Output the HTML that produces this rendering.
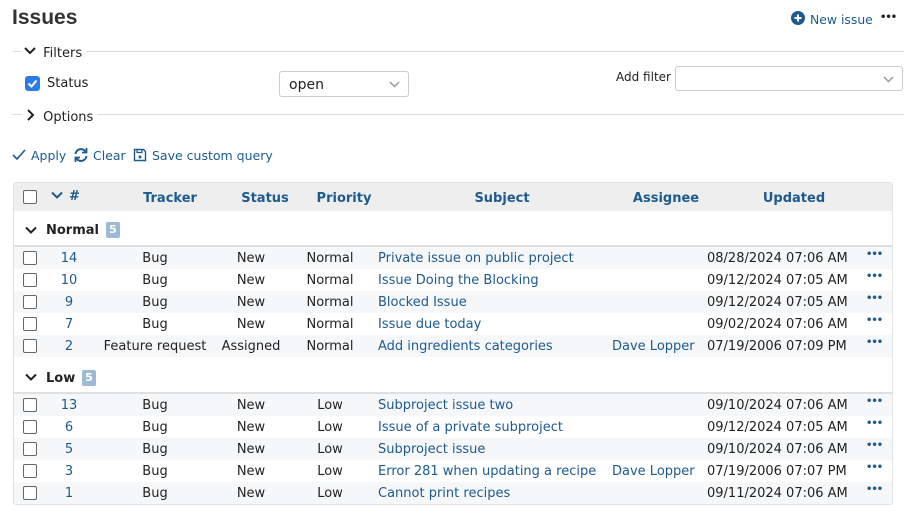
<!DOCTYPE html>
<html><head><meta charset="utf-8"><style>
*{margin:0;padding:0;box-sizing:border-box}
body{width:904px;height:519px;background:#fff;font-family:"DejaVu Sans","Liberation Sans",sans-serif;font-size:13px;color:#222;position:relative;overflow:hidden}
.a{position:absolute;white-space:nowrap}
.c{position:absolute;white-space:nowrap;transform:translateX(-50%)}
.l{color:#1d5a8e}
.cb{position:absolute;width:14px;height:14px;border:1.5px solid #666;border-radius:2px;background:#fff}
.row{position:absolute;left:14px;width:878px;height:22px;line-height:24px}
.odd{background:#f6f7f9}
.hd{font-weight:bold;color:#1d5a8e}
.dots{position:absolute;font-weight:bold;color:#1d5a8e;letter-spacing:-1px;font-size:10px}
.sep{position:absolute;height:1px;background:#ddd}
</style></head><body>
<div class="a" style="left:12px;top:6px;font-family:'Liberation Sans',sans-serif;font-size:21px;font-weight:bold;color:#333">Issues</div>
<svg class="a" style="left:791px;top:11px" width="14" height="14" viewBox="0 0 14 14"><circle cx="7" cy="7" r="7" fill="#1d5a8e"/><path d="M7 3.5v7M3.5 7h7" stroke="#fff" stroke-width="2"/></svg>
<div class="a l" style="left:810px;top:12px;font-size:12.4px">New issue</div>
<div class="a" style="left:880px;top:12px;font-weight:bold;letter-spacing:-1px;font-size:10px">•••</div>

<div class="sep" style="left:12px;top:51px;width:892px"></div>
<div class="a" style="left:22px;top:46px;background:#fff;padding:0 4px 0 2px">
<svg width="12" height="10" viewBox="0 0 12 10" style="vertical-align:1px"><path d="M1 2l5 5 5-5" fill="none" stroke="#222" stroke-width="2"/></svg>
<span style="margin-left:3px">Filters</span></div>
<div class="a" style="left:25px;top:76px;width:15px;height:15px;background:#2d7be5;border-radius:3px"><svg width="15" height="15" viewBox="0 0 15 15"><path d="M3.5 7.5l3 3 5-6" fill="none" stroke="#fff" stroke-width="2"/></svg></div>
<div class="a" style="left:47px;top:76px">Status</div>
<div class="a" style="left:279px;top:71px;width:130px;height:26px;border:1px solid #ccc;border-radius:3px;line-height:26px;padding-left:9px;font-size:14px">open<svg style="position:absolute;right:8px;top:9px" width="11" height="7" viewBox="0 0 11 7"><path d="M1 1l4.5 4.5L10 1" fill="none" stroke="#999" stroke-width="1.5"/></svg></div>
<div class="a" style="left:616px;top:70px;font-size:12px">Add filter</div>
<div class="a" style="left:675px;top:66px;width:228px;height:25px;border:1px solid #ccc;border-radius:3px;background:#fff"><svg style="position:absolute;right:8px;top:9px" width="11" height="7" viewBox="0 0 11 7"><path d="M1 1l4.5 4.5L10 1" fill="none" stroke="#999" stroke-width="1.5"/></svg></div>

<div class="sep" style="left:12px;top:114px;width:892px"></div>
<div class="a" style="left:22px;top:109px;background:#fff;padding:0 4px 0 2px">
<svg width="12" height="12" viewBox="0 0 12 12" style="vertical-align:0"><path d="M4 1l5 5-5 5" fill="none" stroke="#222" stroke-width="2"/></svg>
<span style="margin-left:3px">Options</span></div>

<svg class="a" style="left:12px;top:149px" width="14" height="12" viewBox="0 0 14 12"><path d="M1 6l4 4 8-9" fill="none" stroke="#1d5a8e" stroke-width="1.6"/></svg>
<div class="a l" style="left:31px;top:148px;font-size:12.5px">Apply</div>
<svg class="a" style="left:73px;top:147px" width="16" height="16" viewBox="0 0 16 16"><path d="M2.5 7a5.5 5.5 0 0 1 10-2.5M13.5 9a5.5 5.5 0 0 1-10 2.5" fill="none" stroke="#1d5a8e" stroke-width="2"/><path d="M13.5 1v4.5H9M2.5 15v-4.5H7" fill="none" stroke="#1d5a8e" stroke-width="1.8"/></svg>
<div class="a l" style="left:93px;top:148px;font-size:12.5px">Clear</div>
<svg class="a" style="left:133px;top:148px" width="14" height="14" viewBox="0 0 14 14"><path d="M1.5 1.5h9l2 2v9h-11z" fill="none" stroke="#1d5a8e" stroke-width="1.4"/><path d="M4 1.5v3h5v-3" fill="none" stroke="#1d5a8e" stroke-width="1.2"/><circle cx="7" cy="9" r="1.5" fill="#1d5a8e"/></svg>
<div class="a l" style="left:152px;top:148px;font-size:12.5px">Save custom query</div>

<!-- table -->
<div class="a" style="left:13px;top:182px;width:880px;height:323px;border:1px solid #e2e2e2;border-radius:3px"></div>
<div class="a" style="left:14px;top:183px;width:878px;height:28px;background:#eee"></div>
<div class="cb" style="left:23px;top:190px"></div>
<svg class="a" style="left:51px;top:191px" width="12" height="8" viewBox="0 0 12 8"><path d="M1 1.5l5 5 5-5" fill="none" stroke="#1d5a8e" stroke-width="2"/></svg>
<div class="a hd" style="left:69px;top:189px">#</div>
<div class="c hd" style="left:170px;top:191px">Tracker</div>
<div class="c hd" style="left:265px;top:191px">Status</div>
<div class="c hd" style="left:344px;top:191px">Priority</div>
<div class="c hd" style="left:502px;top:191px">Subject</div>
<div class="c hd" style="left:666px;top:191px">Assignee</div>
<div class="c hd" style="left:794px;top:191px">Updated</div>

<svg class="a" style="left:25px;top:226px" width="12" height="9" viewBox="0 0 12 9"><path d="M1 1.5l5 5 5-5" fill="none" stroke="#222" stroke-width="2"/></svg>
<div class="a" style="left:46px;top:223px;font-weight:bold">Normal</div>
<div class="a" style="left:106px;top:222px;width:14px;height:16px;background:#9db9d5;color:#fff;font-size:11px;font-weight:bold;text-align:center;line-height:16px;border-radius:2px">5</div>
<div class="sep" style="left:14px;top:245px;width:878px;height:2px;background:#e0e0e0"></div>

<svg class="a" style="left:25px;top:373px" width="12" height="9" viewBox="0 0 12 9"><path d="M1 1.5l5 5 5-5" fill="none" stroke="#222" stroke-width="2"/></svg>
<div class="a" style="left:46px;top:371px;font-weight:bold">Low</div>
<div class="a" style="left:82px;top:370px;width:14px;height:16px;background:#9db9d5;color:#fff;font-size:11px;font-weight:bold;text-align:center;line-height:16px;border-radius:2px">5</div>
<div class="sep" style="left:14px;top:392px;width:878px;height:2px;background:#e0e0e0"></div>

<div class="row odd" style="top:247px"><div class="cb" style="left:9px;top:4px"></div><span class="c l" style="left:55px">14</span><span class="c" style="left:141px">Bug</span><span class="c" style="left:237px">New</span><span class="c" style="left:316px">Normal</span><span class="a l" style="left:364px">Private issue on public project</span><span class="a" style="left:693px">08/28/2024 07:06 AM</span><span class="dots" style="left:852px;top:-4px">•••</span></div>
<div class="row" style="top:269px"><div class="cb" style="left:9px;top:4px"></div><span class="c l" style="left:55px">10</span><span class="c" style="left:141px">Bug</span><span class="c" style="left:237px">New</span><span class="c" style="left:316px">Normal</span><span class="a l" style="left:364px">Issue Doing the Blocking</span><span class="a" style="left:693px">09/12/2024 07:05 AM</span><span class="dots" style="left:852px;top:-4px">•••</span></div>
<div class="row odd" style="top:291px"><div class="cb" style="left:9px;top:4px"></div><span class="c l" style="left:55px">9</span><span class="c" style="left:141px">Bug</span><span class="c" style="left:237px">New</span><span class="c" style="left:316px">Normal</span><span class="a l" style="left:364px">Blocked Issue</span><span class="a" style="left:693px">09/12/2024 07:05 AM</span><span class="dots" style="left:852px;top:-4px">•••</span></div>
<div class="row" style="top:313px"><div class="cb" style="left:9px;top:4px"></div><span class="c l" style="left:55px">7</span><span class="c" style="left:141px">Bug</span><span class="c" style="left:237px">New</span><span class="c" style="left:316px">Normal</span><span class="a l" style="left:364px">Issue due today</span><span class="a" style="left:693px">09/02/2024 07:06 AM</span><span class="dots" style="left:852px;top:-4px">•••</span></div>
<div class="row odd" style="top:335px"><div class="cb" style="left:9px;top:4px"></div><span class="c l" style="left:55px">2</span><span class="c" style="left:141px">Feature request</span><span class="c" style="left:237px">Assigned</span><span class="c" style="left:316px">Normal</span><span class="a l" style="left:364px">Add ingredients categories</span><span class="a l" style="left:598px">Dave Lopper</span><span class="a" style="left:693px">07/19/2006 07:09 PM</span><span class="dots" style="left:852px;top:-4px">•••</span></div>

<div class="row odd" style="top:394px"><div class="cb" style="left:9px;top:4px"></div><span class="c l" style="left:55px">13</span><span class="c" style="left:141px">Bug</span><span class="c" style="left:237px">New</span><span class="c" style="left:316px">Low</span><span class="a l" style="left:364px">Subproject issue two</span><span class="a" style="left:693px">09/10/2024 07:06 AM</span><span class="dots" style="left:852px;top:-4px">•••</span></div>
<div class="row" style="top:416px"><div class="cb" style="left:9px;top:4px"></div><span class="c l" style="left:55px">6</span><span class="c" style="left:141px">Bug</span><span class="c" style="left:237px">New</span><span class="c" style="left:316px">Low</span><span class="a l" style="left:364px">Issue of a private subproject</span><span class="a" style="left:693px">09/12/2024 07:05 AM</span><span class="dots" style="left:852px;top:-4px">•••</span></div>
<div class="row odd" style="top:438px"><div class="cb" style="left:9px;top:4px"></div><span class="c l" style="left:55px">5</span><span class="c" style="left:141px">Bug</span><span class="c" style="left:237px">New</span><span class="c" style="left:316px">Low</span><span class="a l" style="left:364px">Subproject issue</span><span class="a" style="left:693px">09/10/2024 07:06 AM</span><span class="dots" style="left:852px;top:-4px">•••</span></div>
<div class="row" style="top:460px"><div class="cb" style="left:9px;top:4px"></div><span class="c l" style="left:55px">3</span><span class="c" style="left:141px">Bug</span><span class="c" style="left:237px">New</span><span class="c" style="left:316px">Low</span><span class="a l" style="left:364px">Error 281 when updating a recipe</span><span class="a l" style="left:598px">Dave Lopper</span><span class="a" style="left:693px">07/19/2006 07:07 PM</span><span class="dots" style="left:852px;top:-4px">•••</span></div>
<div class="row odd" style="top:482px"><div class="cb" style="left:9px;top:4px"></div><span class="c l" style="left:55px">1</span><span class="c" style="left:141px">Bug</span><span class="c" style="left:237px">New</span><span class="c" style="left:316px">Low</span><span class="a l" style="left:364px">Cannot print recipes</span><span class="a" style="left:693px">09/11/2024 07:06 AM</span><span class="dots" style="left:852px;top:-4px">•••</span></div>
</body></html>
